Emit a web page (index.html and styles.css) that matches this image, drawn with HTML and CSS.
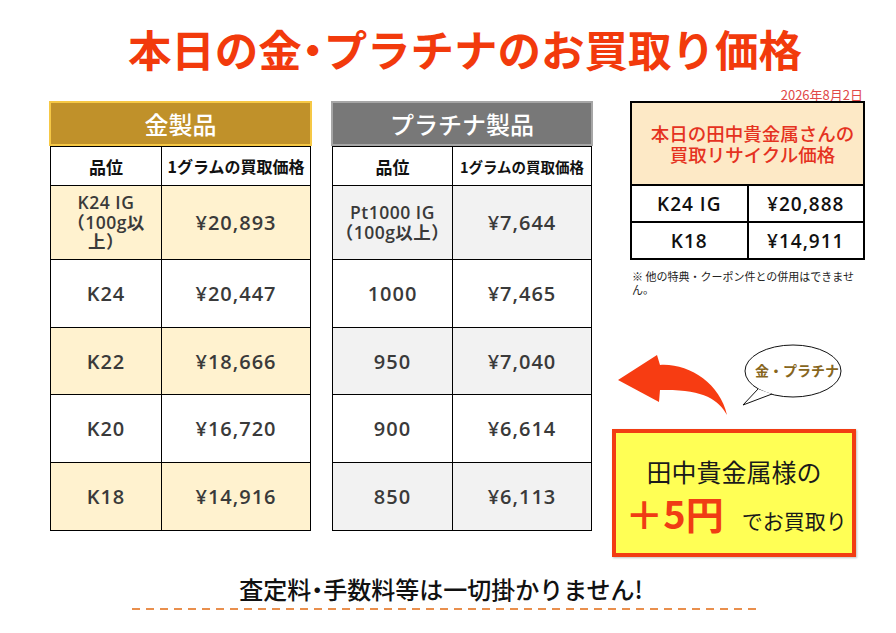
FILE: index.html
```html
<!DOCTYPE html>
<html lang="ja">
<head>
<meta charset="utf-8">
<title>本日の金・プラチナのお買取り価格</title>
<link rel="stylesheet" href="styles.css">
</head>
<body>
<div class="page">
  <h1 class="title">本日の金<span class="dot">・</span>プラチナのお買取り価格</h1>
  <div class="main">
    <section class="col gold">
      <div class="cat">金製品</div>
      <table class="price">
        <colgroup><col class="c1"><col></colgroup>
        <thead>
          <tr class="r-head"><th class="h-grade">品位</th><th class="h-price">1グラムの買取価格</th></tr>
        </thead>
        <tbody>
          <tr class="r1 tint"><td class="multi">K24 IG<br>（100g以<br>上）</td><td>¥20,893</td></tr>
          <tr class="r2"><td>K24</td><td>¥20,447</td></tr>
          <tr class="r3 tint"><td>K22</td><td>¥18,666</td></tr>
          <tr class="r4"><td>K20</td><td>¥16,720</td></tr>
          <tr class="r5 tint"><td>K18</td><td>¥14,916</td></tr>
        </tbody>
      </table>
    </section>
    <section class="col plat">
      <div class="cat">プラチナ製品</div>
      <table class="price">
        <colgroup><col class="c1"><col></colgroup>
        <thead>
          <tr class="r-head"><th class="h-grade">品位</th><th class="h-price">1グラムの買取価格</th></tr>
        </thead>
        <tbody>
          <tr class="r1 tint"><td class="multi">Pt1000 IG<br>（100g以上）</td><td>¥7,644</td></tr>
          <tr class="r2"><td>1000</td><td>¥7,465</td></tr>
          <tr class="r3 tint"><td>950</td><td>¥7,040</td></tr>
          <tr class="r4"><td>900</td><td>¥6,614</td></tr>
          <tr class="r5 tint"><td>850</td><td>¥6,113</td></tr>
        </tbody>
      </table>
    </section>
    <aside class="side">
      <div class="date">2026年8月2日</div>
      <table class="recycle">
        <tr class="rc-head"><th colspan="2">本日の田中貴金属さんの<br>買取リサイクル価格</th></tr>
        <tr><td class="rc-grade">K24 IG</td><td>¥20,888</td></tr>
        <tr><td class="rc-grade">K18</td><td>¥14,911</td></tr>
      </table>
      <p class="note">※ 他の特典・クーポン件との併用はできません。</p>
      <svg class="art" width="254" height="133" viewBox="612 294 254 133">
        <path class="arrow" d="M618,378 L657,353 L660,363 C688,361 720,381 727,413 C718,397 703,387 660,388 L659,400 Z"/>
        <ellipse class="bubble" cx="793" cy="369" rx="48" ry="26"/>
        <path class="bubble-tail" d="M758,387 L743,403 L772,392"/>
        <text class="bubble-text" x="797" y="374" text-anchor="middle">金・プラチナ</text>
      </svg>
      <div class="promo">
        <div class="promo-line1">田中貴金属様の</div>
        <div class="promo-line2"><span class="plus">＋5円</span><span class="tail">でお買取り</span></div>
      </div>
    </aside>
  </div>
  <div class="footer">
    <p class="footer-text">査定料<span class="dot">・</span>手数料等は一切掛かりません!</p>
    <div class="dash"></div>
  </div>
</div>
</body>
</html>
```
FILE: styles.css
```css
html, body {
  margin: 0;
  padding: 0;
  background: #ffffff;
}
body {
  font-family: "Noto Sans CJK JP", "Noto Sans", sans-serif;
  color: #222;
}
.page {
  width: 896px;
  height: 633px;
  overflow: hidden;
  position: relative;
}
.dot {
  font-feature-settings: "palt" 1;
}
.title {
  margin: 0;
  padding: 24px 0 0 34px;
  height: 50px;
  line-height: 50px;
  text-align: center;
  font-size: 43.5px;
  font-weight: 700;
  color: #f23a0c;
}
.main {
  display: flex;
  align-items: flex-start;
  gap: 19px;
  margin-top: 27px;
  padding-left: 49px;
}
.col {
  width: 263px;
}
.plat {
  width: 262px;
}
.cat {
  box-sizing: border-box;
  height: 45px;
  border: 2px solid;
  text-align: center;
  line-height: 41px;
  font-size: 24px;
  font-weight: 500;
  color: #ffffff;
}
.gold .cat {
  background: #c0912a;
  border-color: #f6c845;
}
.plat .cat {
  background: #787878;
  border-color: #a6a6a6;
}
.price {
  border-collapse: collapse;
  table-layout: fixed;
  width: 261px;
  margin: 0 1px;
}
.plat .price {
  width: 260px;
}
.gold .c1 { width: 111px; }
.plat .c1 { width: 120px; }
.price th,
.price td {
  border: 1px solid #000;
  padding: 0;
  text-align: center;
  vertical-align: middle;
}
.price th {
  background: #fff;
  color: #111;
  font-weight: 700;
}
.h-grade { font-size: 17px; }
.gold .h-price { font-size: 16px; }
.plat .h-price { font-size: 14.5px; }
.price td {
  font-family: "Open Sans", "Noto Sans CJK JP", sans-serif;
  font-size: 20px;
  font-weight: 600;
  letter-spacing: 1px;
  color: #3a3a3a;
}
.price td.multi {
  font-size: 17.5px;
  line-height: 19.5px;
  letter-spacing: 0.5px;
}
.r-head { height: 39px; }
.r1 { height: 74px; }
.r2 { height: 68px; }
.r3 { height: 67px; }
.r4 { height: 68px; }
.r5 { height: 68px; }
.price tr { background: #fff; }
.gold .tint { background: #fff2cf; }
.plat .tint { background: #f2f2f2; }

.side {
  width: 254px;
  display: flex;
  flex-direction: column;
}
.date {
  margin-top: -13px;
  height: 13px;
  line-height: 13px;
  font-size: 13px;
  color: #e14848;
  text-align: right;
  padding-right: 3px;
}
.recycle {
  margin-left: 18px;
  width: 235px;
  border-collapse: collapse;
  border: 2px solid #000;
  table-layout: fixed;
}
.recycle th,
.recycle td {
  border: 2px solid #000;
  padding: 0;
  text-align: center;
}
.rc-head {
  height: 83px;
}
.rc-head th {
  background: #fde9c6;
  color: #e5321f;
  font-size: 18.5px;
  font-weight: 500;
  line-height: 20.5px;
  padding-left: 10px;
}
.recycle tr:not(.rc-head) {
  height: 37px;
}
.recycle td {
  font-family: "Open Sans", "Noto Sans CJK JP", sans-serif;
  font-size: 19px;
  font-weight: 600;
  letter-spacing: 1px;
  color: #111;
}
.rc-grade {
  width: 110px;
}
.note {
  margin: 10px 0 0 20px;
  width: 228px;
  font-size: 11px;
  line-height: 13px;
  color: #222;
}
.art {
  display: block;
  margin-top: 0;
}
.arrow {
  fill: #f73c12;
}
.bubble,
.bubble-tail {
  fill: #fff;
  stroke: #111;
  stroke-width: 1;
}
.bubble-text {
  font-family: "Noto Sans CJK JP", sans-serif;
  font-size: 14px;
  font-weight: 700;
  fill: #87661d;
}
.promo {
  box-sizing: border-box;
  width: 244px;
  height: 128px;
  border: 4px solid #f23c12;
  background: #ffff55;
  box-shadow: 1px 1px 2px rgba(0,0,0,0.25);
  display: flex;
  flex-direction: column;
  align-items: center;
  padding-top: 21px;
}
.promo-line1 {
  font-size: 25px;
  line-height: 34px;
  color: #1a1a1a;
}
.promo-line2 {
  display: flex;
  align-items: baseline;
  gap: 18px;
  margin-top: 2px;
  padding-left: 4px;
}
.plus {
  font-size: 38px;
  line-height: 46px;
  font-weight: 600;
  color: #f03c14;
}
.tail {
  font-size: 21px;
  color: #1a1a1a;
}
.footer {
  margin-top: 19px;
}
.footer-text {
  margin: 0;
  text-align: center;
  padding-right: 14px;
  font-size: 24px;
  line-height: 26px;
  font-weight: 500;
  color: #111;
}
.dash {
  margin: 6px 0 0 132px;
  width: 625px;
  height: 2px;
  background: repeating-linear-gradient(to right, #e98f4d 0 8px, transparent 8px 14px);
}
```
